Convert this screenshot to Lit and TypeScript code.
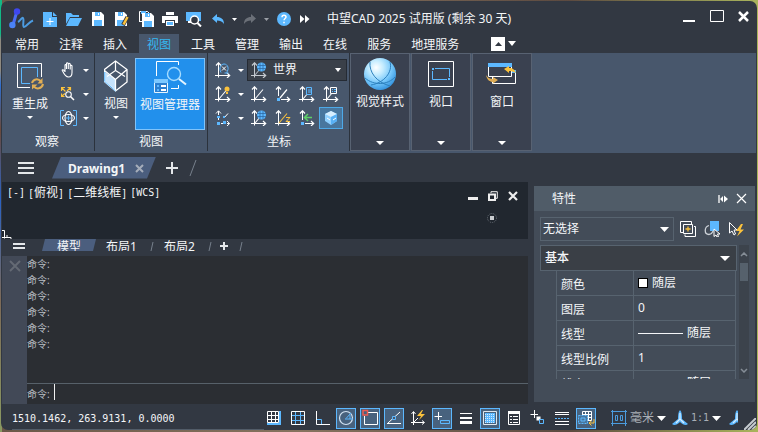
import { LitElement, html, css, svg, nothing, type TemplateResult } from "lit";
import { customElement } from "lit/decorators.js";
import { classMap } from "lit/directives/class-map.js";

const W = "#ffffff";
const B = "#5cb8ff";
const Y = "#fbc23c";

const icon = (w: number, h: number, body: unknown) =>
  html`<svg class="icon" width=${w} height=${h} viewBox="0 0 ${w} ${h}" fill="none" aria-hidden="true">${body}</svg>`;

const caret = (w = 7, h = 4) => icon(w, h, svg`<path d="M0 0H${w}L${w / 2} ${h}z" fill="#fff"/>`);

/* ---------- quick access bar ---------- */
const logo = icon(25, 22, svg`
  <path d="M4 17L8 3" stroke="#4a6cf5" stroke-width="3"/>
  <circle cx="8" cy="3.5" r="3.2" fill="#3f47ef"/><circle cx="3.4" cy="17" r="3.2" fill="#4a83f7"/>
  <path d="M9 14C11 13 13 9 14 10C15.500 11 13 18.500 15 19C17 19 20 14 24 12.500" stroke="#4c9be0" stroke-width="2"/>`);
const floppy = svg`
  <path d="M0 0H9L12 3V14H0z" fill="#fff"/><path d="M3 0H8V4H3z" fill="${B}"/><path d="M2 8H10V14H2z" fill="${B}"/><path d="M6 1h1v2H6z" fill="#fff"/><path d="M0 7h12" stroke="#fff"/>`;
const iNew = icon(14, 15, svg`<path d="M0 0H9V5H14V15H0z" fill="${B}"/><path d="M10 0L14 4H10z" fill="${B}"/><path d="M7 6V13M3.500 9.500H10.500" stroke="#fff"/>`);
const iOpen = icon(16, 14, svg`<path d="M0 1H5L7 3H13V5H4L0 12z" fill="${B}"/><path d="M4 6H16L12 14H0z" fill="${B}"/>`);
const iSave = icon(12, 14, floppy);
const iSaveAs = icon(14, 14, svg`${floppy}<path d="M12.500 5L8 13" stroke="#323842" stroke-width="4"/><path d="M12.500 5L8.500 12.500" stroke="${Y}" stroke-width="2.500"/>`);
const iSaveAll = icon(15, 16, svg`<path d="M.5 11V.5H8.500L10 2M.5 10.500H3" stroke="#fff"/><path d="M2 0h5v3H2z" fill="${B}"/><g transform="translate(3 2)">${floppy}</g>`);
const iPrint = icon(16, 14, svg`<path d="M4 0h8v3H4zM0 4h16v7h-3V8H3v3H0z" fill="#fff"/><path d="M4 9h8v5H4z" fill="#fff"/><path d="M5 10h6v3H5z" fill="${B}"/>`);
const iPreview = icon(16, 15, svg`<path d="M0 0H15V9H0z" fill="${B}"/><path d="M2 9h3v2H2z" fill="#fff"/><circle cx="8.500" cy="8" r="4" fill="#323842" stroke="#fff" stroke-width="1.500"/><path d="M11.500 11L15 14.500" stroke="#fff" stroke-width="2"/>`);
const undo = (c: string) => svg`<path d="M0 4.500L5 0V3C9 3 12 5 12 10C10 7 8 6.500 5 6.500V9z" fill="${c}"/>`;
const iUndo = icon(12, 10, undo(B));
const iRedo = icon(12, 10, svg`<g transform="matrix(-1 0 0 1 12 0)">${undo("#6b7078")}</g>`);
const iHelp = icon(14, 14, svg`<circle cx="7" cy="7" r="7" fill="${B}"/><path d="M5 5.200C5 2.500 9 2.700 9 5C9 6.500 7 6.500 7 8.300M7 9.700V11.300" stroke="#fff" stroke-width="1.500"/>`);
const iMore = icon(10, 8, svg`<path d="M0 0L4.500 4L0 8zM5 0L9.500 4L5 8z" fill="#fff"/>`);

/* ---------- ribbon ---------- */
const iRegen = icon(28, 28, svg`
  <path d="M14 25.500H1.500V1.500H25.500V15" stroke="#fff"/><path d="M14 21.500H5.500V5.500H21.500V15" stroke="${B}"/>
  <path d="M16 21C17 17 22 16 25 19.500M27 22C26 27 20 27.500 18 24.500" stroke="#e0ae55" stroke-width="2"/>
  <path d="M26.500 16V21.500H21.500zM16 27.500V22.500H21.500z" fill="#e0ae55"/>`);
const iCubeView = icon(24, 32, svg`
  <path d="M.5 11.500L11.500 19.500V31.500L.5 21.500z" fill="#c5e2fb"/>
  <path d="M11.500 1L23 9.500V22L11.500 31L.5 21.500V9.500z M.5 10.500L11.500 19.500L23 9.500M11.500 19.500V31" stroke="#fff" stroke-width="1.300"/>
  <path d="M11.500 1V10.500L3 16.500M11.500 10.500L21 16.500" stroke="#fff" stroke-width="1.200"/>
  <path d="M.7 12V21.500L11.500 31" stroke="${B}"/>`);
const iManager = icon(34, 32, svg`
  <path d="M3.500 15V.5H25.500V4M25.500 24V27.500H18" stroke="#fff"/>
  <circle cx="21" cy="13" r="6.500" stroke="#a6dcff" stroke-width="1.400"/><path d="M26 18L33 23.500" stroke="#e3f4ff" stroke-width="2"/>
  <path d="M1 18H15V32H1z" fill="#2b7fd0"/><path d="M1.500 18.500H14.500V31.500H1.500z" stroke="#e4f4ff"/><path d="M1 18H15V22H1z" fill="#7cc8ff"/>
  <path d="M4 24h2v2H4zM4 28h2v2H4z" fill="${B}"/><path d="M8 25h5M8 29h5" stroke="#fff" stroke-width="2"/>`);
const iPan = icon(14, 16, svg`<path d="M4 10V3.500C4 2.300 5.500 2.300 5.500 3.500V7V1.700C5.500.4 7.300.4 7.300 1.700V7V2.300C7.300 1 9.200 1 9.200 2.300V7.500V4C9.200 3 11 3 11 4V10.500C11 13 10 15 7.500 15C5 15 3.700 13.500 1.300 8.500C1 7.500 2.300 7 4 9.500" stroke="#fff" stroke-width="1.100"/>`);
const iZoom = icon(14, 14, svg`
  <path d="M1 1L4.500 4.500M9 1L6 4M1 9L4 6.500M.5 4V.5H4M6.500.5H9.500V3.500M.5 6.500V9.500H3.500" stroke="${Y}" stroke-width="1.200"/>
  <circle cx="7.500" cy="7.500" r="2.800" stroke="#fff" stroke-width="1.100"/><path d="M9.500 9.500L13 13" stroke="#fff" stroke-width="1.500"/>`);
const iOrbit = icon(17, 16, svg`
  <path d="M4 .5H.5V15.500H4M13 .5H16.500V15.500H13" stroke="${B}"/>
  <ellipse cx="8.500" cy="8" rx="3.500" ry="6.500" stroke="#fff" stroke-width="1.100"/><ellipse cx="8.500" cy="8" rx="6" ry="3.500" stroke="#fff" stroke-width="1.100"/>
  <path d="M8.500 5.500v5M6 8h5" stroke="${B}"/>`);

const axes = (line: string = W, c: string = W) => svg`
  <path d="M3.500 1V15.500M0 13.500H14" stroke="${c}"/><path d="M1 3.500L3.500 .8L6 3.500M12 11L14.700 13.500L12 16" stroke="${c}" stroke-width="1.200"/>
  ${line ? svg`<path d="M4 13L12 3.500" stroke="${line}" stroke-width="1.100"/>` : nothing}`;
const globe = svg`<circle cx="10.500" cy="5" r="4.500" fill="${B}"/><path d="M6 3.500h9M6 6.500h9M9 1v8M12 1v8" stroke="#2f6ba5" stroke-width=".8"/>`;
const ax = (line: string, extra: unknown, c = W) => icon(16, 16, svg`${axes(line, c)}${extra}`);
const uRot = ax("", svg`<path d="M6 10.500C3.500 6 6 2 9 2C13 2 14.500 7 11.500 10.500M9.500 11h4" stroke="${B}"/><path d="M7 4.500l4 4M11 4.500l-4 4" stroke="#fff"/>`);
const uLamp = ax(W, svg`<circle cx="12" cy="3" r="2.500" fill="${Y}"/><path d="M11 6h2v2h-2z" fill="${Y}"/>`);
const uPlain = ax(W, nothing);
const uOrigin = icon(16, 16, svg`<path d="M3.500 1V10M6 13.500H14" stroke="#fff"/><path d="M1 3.500L3.500.8L6 3.500M12 11L14.700 13.500L12 16M5 12L12 3.500" stroke="#fff" stroke-width="1.200" /><path d="M2 12h3v3H2z" fill="${B}"/>`);
const uObj = ax(W, svg`<path d="M7.500 1.500h5v7h-5z" stroke="${B}" fill="#48576c"/><path d="M9 4h3M9 6h3" stroke="${B}"/>`);
const uNamed = ax(W, svg`<path d="M7.500 1.500h6v6h-6z" stroke="#fff" fill="#48576c"/><path d="M9 3.500h1M9 5.500h1M11 3.500h2M11 5.500h2" stroke="${B}"/>`);
const uThree = icon(16, 16, svg`<path d="M3.500 1V10M6 13.500H14" stroke="#fff" stroke-dasharray="4 2"/><path d="M1 3.500L3.500.8L6 3.500M12 11L14.700 13.500L12 16M9 8L13 3.500" stroke="#fff"/><path d="M2 12h3v3H2zM8 11h3v3H8zM2 6h3v2H2zM8 6h2v2H8z" fill="${B}"/>`);
const uWorld = ax(W, globe);
const uCombo = ax("#aab0b8", globe, "#c4c9cf");
const uZ = ax(Y, svg`<path d="M11 7.500h4L11 11.500h4" stroke="${Y}"/>`);
const uPrev = icon(16, 16, svg`<path d="M3.500 1V10M6 13.500H14" stroke="#fff"/><path d="M1 3.500L3.500.8L6 3.500M12 11L14.700 13.500L12 16" stroke="#fff" stroke-width="1.200"/><path d="M2 12h3v3H2z" fill="${B}"/><path d="M13 7.500H6M9 4L5.500 7.500L9 11" stroke="#5fd068" stroke-width="1.500"/>`);
const uCube = icon(14, 14, svg`<path d="M7 0L13 3V10L7 14L1 10V3z" fill="#8fd0ff"/><path d="M7 0L13 3L7 6L1 3z" fill="#d6eeff"/><path d="M7 6L13 3V10L7 14z" fill="#58b0f5"/><path d="M3 7l3 2M9 9l3-2" stroke="#fff"/>`);

const iSphere = icon(32, 32, svg`
  <defs><radialGradient id="ball" cx=".38" cy=".3" r=".75"><stop offset="0" stop-color="#fff"/><stop offset=".3" stop-color="#c4ecff"/><stop offset=".65" stop-color="#74c6fa"/><stop offset="1" stop-color="#2e8fdc"/></radialGradient></defs>
  <circle cx="16" cy="16" r="16" fill="url(#ball)"/>
  <path d="M6 4C5 14 12 24 26 28M26 4C29 14 20 25 7 27M1 20C10 28 24 27 31 19" stroke="#2c80bd" stroke-width="1"/>`);
const iViewport = icon(26, 26, svg`<path d="M.5.5H25.500V25.500H.5z" stroke="#fff"/><path d="M7 7.500H21.500V16M19 18.500H4.500V10" stroke="${B}"/><path d="M4 7h2v2H4zM20 17h2v2h-2z" fill="${B}"/>`);
const iWindow = icon(32, 24, svg`
  <path d="M6.500 9.500H29.500V21.500H6.500z" stroke="#fff"/><path d="M26 8h4v3h-4z" fill="${B}"/><path d="M2.500 1.500H25.500V14.500H2.500z" fill="#3a4150" stroke="#fff"/><path d="M2 1H26V5H2z" fill="${B}"/>
  <path d="M18 7L23 4V6C27 6 29 8 30 11C27 9.500 25 9 23 9V11z" fill="${Y}"/><path d="M12 18L7 15V17C4 17 2 16 0 13C1 18 4 20 7 20V21.500z" fill="#e0ae55"/>`);

/* ---------- shared glyphs ---------- */
const bars = (w: number, ys: number[]) => icon(w, ys[ys.length - 1] + 2, ys.map((y) => svg`<path d="M0 ${y}H${w}V${y + 2}H0z" fill="#e4e7ea"/>`));
const cross = (s: number, c: string, sw: number) => icon(s, s, svg`<path d="M1 1L${s - 1} ${s - 1}M${s - 1} 1L1 ${s - 1}" stroke="${c}" stroke-width="${sw}"/>`);
const plus = (s: number, sw: number) => icon(s, s, svg`<path d="M${s / 2} 0V${s}M0 ${s / 2}H${s}" stroke="#e4e7ea" stroke-width="${sw}"/>`);
const slash = (w: number, h: number) => icon(w, h, svg`<path d="M${w - 1} 0L1 ${h}" stroke="#77808c"/>`);

/* ---------- properties ---------- */
const pAdd = icon(16, 16, svg`<path d="M3 11.500H.5V.5H11.500V3M5 13.500V15.500H15.500V5.500H14" stroke="#fff"/><path d="M3.500 3.500H12.500V12.500H3.500z" stroke="#fff"/><path d="M8 5.500v5M5.500 8h5" stroke="${Y}" stroke-width="1.300"/>`);
const pPick = icon(16, 16, svg`<path d="M6 0H15V10H6z" fill="${B}"/><path d="M5 4.500C0 6 0 13.500 5 13.500C8 13.500 8 12 9 10" stroke="#cdd2d8" stroke-width="1.300"/><path d="M10 8V15.500L12 14L13 16L14.500 15.500L13.500 13H16z" fill="#434c58" stroke="#fff"/>`);
const pQuick = icon(16, 16, svg`<path d="M1.500 1.500V12L4 10L6 14L7.500 13L6 9H9z" stroke="#fff"/><path d="M13 3L8 10H11.500L9 15.500L16 8.500H12.500L15 3z" fill="${Y}"/>`);
const pDock = icon(10, 10, svg`<path d="M1 1V9" stroke="#fff" stroke-width="1.300"/><path d="M2 5L5 2V8zM10 5L6 1.500V8.500z" fill="#fff"/>`);

/* ---------- status bar ---------- */
const S = (b: unknown) => icon(18, 18, b);
const sSnap = S(svg`<path d="M2.500 2.500H13.500V13.500H2.500zM6.500 2V14M10.500 2V14M2 6.500H14M2 10.500H14" stroke="#fff"/><path d="M15 2V15H2" stroke="${B}" stroke-width="2"/>`);
const sGrid = S(svg`<path d="M6.500 3V15M11.500 3V15M3 6.500H15M3 11.500H15" stroke="${B}"/><path d="M2.500 2.500H15.500V15.500H2.500z" stroke="#fff"/>`);
const sOrtho = S(svg`<path d="M3.500 2V15.500H17" stroke="#fff"/><path d="M4 10.500H8.500V15" stroke="${B}"/>`);
const sPolar = S(svg`<circle cx="9" cy="9" r="6.500" stroke="#d3e3f2" stroke-width="1.200"/><path d="M9 9.500L14 4M8 10H16M13 6v4" stroke="${B}"/>`);
const sOsnap = S(svg`<path d="M6 3.500H16.500V15.500H3.500V7" stroke="#fff"/><path d="M2 1.500H6.500V6H2z" stroke="#ec5b52" stroke-width="1.500"/>`);
const sMid = S(svg`<path d="M2 14.500H16M3 14L15 3" stroke="#fff"/><path d="M7.500 7.500H10.500V10.500H7.500z" stroke="${B}" fill="#48576c"/>`);
const sDyn = S(svg`<path d="M4.500 3V16M2 13.500H15M2.500 5L4.500 2.500L6.500 5M13 11.500L15.500 13.500L13 15.500M5 13L9 9" stroke="#fff"/><path d="M13 1L8 7H12L10 11L16 5H12L14 1z" fill="${Y}"/>`);
const sInput = S(svg`<path d="M5.500 3V11M1.500 7.500H9" stroke="#fff"/><path d="M7.500 11.500H16.500V14.500H7.500z" stroke="${B}"/>`);
const sWeight = S(svg`<path d="M3 4h12v1H3zM3 8h12v2H3zM3 12h12v3H3z" fill="#fff"/>`);
const sTrans = S(svg`<path d="M2.500 2.500H15.500V15.500H2.500z" stroke="#dfe8f0"/><path d="M4 4H14V14H4z" fill="${B}"/><path d="M4 5.500H14M4 7.500H14M4 9.500H14M4 11.500H14M4 13.500H14" stroke="#d5ecff" stroke-dasharray="1 1"/>`);
const sProps = S(svg`<path d="M3.500 2.500H14.500V15.500H3.500z" stroke="#fff"/><path d="M3 2h12v3H3z" fill="#fff"/><path d="M5 7.500h2M8 7.500h5M5 10.500h2M8 10.500h5M5 13.500h2M8 13.500h5" stroke="#fff"/>`);
const sCycle = S(svg`<path d="M5.500 1V9M1.500 5.500H9" stroke="#fff"/><path d="M7.500 7.500H11.500V11.500H7.500z" fill="#fff"/><path d="M10.500 10.500H14.500V14.500H10.500z" stroke="${B}" fill="#323842"/>`);
const sLines = S(svg`<path d="M2 3.500H16M2 5.500H16M2 12.500H16M2 15.500H16" stroke="#fff"/><path d="M2 9.500H16" stroke="${B}" stroke-dasharray="2 1"/>`);
const sAnno = S(svg`<path d="M5.500 2.500H14.500V11.500H5.500zM8.500 2V11M11.500 2V11M5 5.500H15M5 8.500H15" stroke="#fff"/><path d="M1.500 6.500H10.500V14.500H1.500z" fill="#48769e" stroke="${B}" stroke-dasharray="2 1"/><path d="M4 9h4v3H4z" stroke="${B}"/><path d="M17 10V14H12.500M14.500 12L12 14L14.500 16.500" stroke="${Y}"/>`);
const sUnit = icon(16, 16, svg`<path d="M1.500 0V16M14.500 0V16M0 1.500H16M0 13.500H16" stroke="#4b9cde"/><path d="M4.500 5.500h2v5h-2zM9.500 5.500h2v5h-2z" stroke="#4b9cde"/>`);
const blade = svg`<path d="M8 0C10 2 10 6 10 9L16 14C14 16 11 15 8 12C5 15 2 16 0 14L6 9C6 6 6 2 8 0z" fill="${B}"/><path d="M8 3V9L4 13M8 9L12 13" stroke="#d6eeff" stroke-width="1.300"/>`;
const sScale = icon(16, 16, blade);
const sScaleCut = icon(9, 16, blade);
const grip = icon(12, 12, svg`<path d="M0 12L12 0M4 12L12 4M8 12L12 8" stroke="#c6cbd0" stroke-width="2"/>`);

type Item = [string, TemplateResult];

const QUICK: Item[] = [["新建", iNew], ["打开", iOpen], ["保存", iSave], ["另存为", iSaveAs], ["全部保存", iSaveAll], ["打印", iPrint], ["打印预览", iPreview], ["撤销", iUndo]];
const MENUS = ["常用", "注释", "插入", "视图", "工具", "管理", "输出", "在线", "服务", "地理服务"];
const STATUS: [string, TemplateResult, boolean][] = [
  ["捕捉", sSnap, false], ["栅格", sGrid, false], ["正交", sOrtho, false], ["极轴", sPolar, true], ["对象捕捉", sOsnap, true],
  ["对象追踪", sMid, true], ["动态UCS", sDyn, false], ["动态输入", sInput, true], ["线宽", sWeight, false], ["透明度", sTrans, true],
  ["快捷特性", sProps, false], ["选择循环", sCycle, false], ["线型显示", sLines, false], ["注释监视", sAnno, true],
];

@customElement("app-root")
export class AppRoot extends LitElement {
  static styles = css`
    :host {
      display: flex; box-sizing: border-box; min-height: 100vh; padding: 1px 1px 2px;
      background:
        linear-gradient(#12b886 0 34px, #8f8a80 40px 70px, #2f6fd0 85px, #6b4a3c 130px, #2a62c4 200px, #7d6a58 300px, #8a9a62 100%) 0 0 / 2px 100% no-repeat,
        linear-gradient(90deg, #6b5848, #86735f 40%, #5c4a40 75%, #a9b45c);
      font: 12px/16px "Noto Sans", "Noto Sans CJK SC", sans-serif; color: #f4f6f8;
    }
    * { box-sizing: border-box; }
    button, select, input { font: inherit; color: inherit; background: none; border: 0; margin: 0; padding: 0; border-radius: 0; }
    button { display: flex; align-items: center; justify-content: center; white-space: nowrap; }
    select { appearance: none; }
    input { outline: none; }
    .icon { display: block; flex: none; }
    .window { flex: 1; min-width: 0; display: flex; flex-direction: column; padding: 0 1px; background: #323842; border-radius: 7px; overflow: hidden; }

    .title { display: flex; align-items: center; height: 33px; padding: 3px 3px 0 7px; }
    .logo { width: 29px; }
    .tool { width: 24px; height: 24px; }
    .drop { width: 8px; height: 24px; }
    .help { margin-left: 2px; }
    .more { width: 18px; height: 24px; }
    .caption { margin: 0 0 0 13px; font: inherit; flex: 1; white-space: nowrap; }
    .controls { display: flex; gap: 4px; padding-bottom: 6px; }
    .controls .tool:last-child { width: 20px; }

    .menus { display: flex; align-items: stretch; height: 19px; padding-left: 5px; gap: 4px; }
    .menu { padding: 3px 8px 0; }
    .menu.on { background: #48576c; color: #35b8f2; }
    .fold { align-self: center; width: 14px; height: 14px; margin-left: 20px; background: #fff; }
    .menus .drop { height: 19px; margin-left: -1px; }

    .ribbon { display: flex; height: 100px; background: #48576c; }
    .group { display: flex; flex-direction: column; gap: 4px; padding: 5px 2px 0; height: 98px; border-right: 1px solid #2b323c; }
    .body { display: flex; height: 72px; }
    .name { text-align: center; line-height: 16px; }
    .observe { padding-left: 0; }
    .observe .body { gap: 5px; padding-left: 7px; }
    .big { flex-direction: column; justify-content: flex-start; gap: 4px; padding-top: 2px; width: 38px; height: 72px; }
    .big.wide { width: 42px; }
    .big.on { width: 70px; background: #2290ec; border: 1px solid #7fc4fb; }
    .art { display: flex; align-items: center; justify-content: center; height: 32px; }
    .row { display: flex; height: 24px; align-items: center; }
    .cell { width: 24px; height: 22px; }
    .cell.on { background: #48769e; border: 1px solid #4ea9e8; }
    .side { width: 12px; height: 22px; }
    .ucs { padding-left: 3px; }
    .combo { display: flex; align-items: center; position: relative; border: 1px solid #252b34; background: #3a4049; width: 100px; height: 22px; padding: 0 5px 0 3px; gap: 6px; }
    .combo select { flex: 1; min-width: 0; height: 20px; }
    .combo .icon:last-child { pointer-events: none; }
    .panel { flex-direction: column; justify-content: flex-start; gap: 4px; width: 60px; height: 98px; margin-right: 1px; padding: 4px 0 5px; background: #3a4150; border: 1px solid #586272; }
    .panel > .icon { margin-top: auto; }

    .docs { display: flex; align-items: center; height: 29px; padding-left: 16px; }
    .doc { display: flex; align-items: center; gap: 8px; width: 104px; height: 22px; margin: 0 10px 0 18px; padding: 2px 12px 0 16px; background: #4b5e7e; clip-path: polygon(9px 0, 100% 0, calc(100% - 9px) 100%, 0 100%); font-weight: 700; justify-content: space-between; white-space: nowrap; }
    .docs .slash { margin-left: 11px; }

    .work { flex: 1; display: flex; gap: 6px; min-height: 0; }
    .left { flex: 1; min-width: 0; display: flex; flex-direction: column; }
    .canvas { flex: 1; position: relative; display: flex; justify-content: space-between; background: #21272f; padding: 3px 5px 0 5px; min-height: 57px; }
    .mono { font-family: "DejaVu Sans Mono", "Noto Sans CJK SC", monospace; font-size: 10px; white-space: nowrap; }
    .cjk { font-size: 12px; }
    .view { display: flex; gap: 3px; }
    .view-tools { display: flex; }
    .view-tools button { width: 20px; height: 22px; }
    .origin { position: absolute; left: 0; bottom: 0; }
    .orb { position: absolute; right: 31px; top: 31px; }
    .layouts { display: flex; height: 17px; padding: 0 0 5px 11px; }
    .layouts > * { height: 12px; overflow: hidden; }
    .layouts button { align-items: flex-start; }
    .layouts .bar { width: 12px; padding-top: 4px; margin-right: 17px; }
    .layouts .tab { width: 54px; background: #4b5e7e; clip-path: polygon(3px 0, 100% 0, calc(100% - 3px) 100%, 0 100%); }
    .layouts .sheet { width: 51px; }
    .layouts .sep { width: 7px; display: flex; align-items: center; justify-content: flex-end; padding-top: 2px; }
    .layouts .add { width: 24px; padding-top: 3px; }

    .command { display: flex; background: #2b2e33; }
    .strip { width: 25px; background: #424957; align-items: flex-start; padding-top: 4px; }
    .console { flex: 1; min-width: 0; color: #b9bec4; font-size: 10px; }
    .log { min-height: 127px; }
    .line { height: 16px; }
    .prompt { display: flex; height: 21px; border-top: 1px solid #57616a; gap: 4px; }
    .prompt label { padding-top: 2px; width: 23px; }
    .cursor { width: 1px; height: 16px; background: #f0f0f0; }
    .prompt input { flex: 1; min-width: 0; caret-color: transparent; }

    .props { width: 221px; margin: 4px 1px 2px 0; background: #434c58; display: flex; flex-direction: column; min-height: 0; }
    .head { display: flex; align-items: center; height: 25px; padding: 0 5px 0 18px; background: #505c68; }
    .head h2 { flex: 1; margin: 0; font: inherit; }
    .head button { width: 18px; height: 20px; }
    .pick { display: flex; align-items: center; gap: 4px; padding: 6px 5px 3px 6px; }
    .choose { display: flex; align-items: center; width: 134px; height: 24px; border: 1px solid #57636f; padding: 0 4px 0 2px; }
    .choose select { flex: 1; height: 22px; }
    .pick button { width: 20px; height: 24px; }
    .scroll { flex: 1; min-height: 0; display: flex; gap: 2px; margin: 1px 6px 23px; overflow: hidden; height: 134px; }
    .list { flex: 1; height: 134px; overflow: hidden; }
    .section { width: 100%; height: 26px; justify-content: space-between; padding: 0 6px 0 4px; background: #3a3f46; border: 1px solid #57636f; font-weight: 500; }
    table { width: 180px; margin-left: 16px; border-collapse: collapse; table-layout: fixed; margin-top: -1px; }
    th, td { height: 25px; padding: 0 3px 0 4px; border: 1px solid #57636f; font-weight: 400; text-align: left; line-height: 16px; }
    th { width: 77px; padding-top: 3px; }
    .val { display: flex; align-items: center; gap: 4px; }
    .swatch { width: 10px; height: 10px; background: #fff; border: 1px solid #000; }
    .stroke { width: 45px; height: 1px; background: #f4f6f8; }
    .track { width: 10px; height: 134px; display: flex; flex-direction: column; align-items: center; background: #3c434c; }
    .track .up { height: 18px; width: 10px; }
    .thumb { width: 8px; height: 18px; background: #56616c; }
    .track .down { height: 18px; width: 10px; margin-top: auto; }

    .status { display: flex; align-items: center; height: 26px; padding-top: 2px; }
    .coords { flex: 0 0 262px; height: 23px; padding: 4px 0 0 10px; }
    .rule { display: block; height: 1px; background: #525c68; margin-top: 2px; }
    .toggles { display: flex; gap: 4px; }
    .toggle { width: 20px; height: 21px; }
    .toggle.on { background: #48627e; border: 1px solid #5cb8ff; }
    .unit { gap: 3px; margin-left: 15px; color: #a9afb6; }
    .scale { gap: 3px; margin-left: 6px; color: #a9afb6; }
    .cut { margin-left: 8px; }
    .grip { margin: 3px 0 0 auto; align-self: flex-end; }
  `;

  private tool([label, art]: Item, cls = "tool") {
    return html`<button class=${cls} aria-label=${label}>${art}</button>`;
  }

  private drop(label: string, cls = "drop", dim = false) {
    return html`<button class=${cls} aria-label=${label}>${dim ? icon(5, 3, svg`<path d="M0 0H5L2.500 3z" fill="#9a9fa6"/>`) : cls === "drop" ? caret(5, 3) : caret(6, 3)}</button>`;
  }

  private renderTitle() {
    return html`<header class="title">
      <span class="logo">${logo}</span>
      ${QUICK.map((q) => this.tool(q))}
      ${this.drop("撤销列表")}${this.tool(["重做", iRedo])}${this.drop("重做列表", "drop", true)}
      <button class="tool help" aria-label="帮助">${iHelp}</button>
      <button class="more" aria-label="更多">${iMore}</button>
      <h1 class="caption">中望CAD 2025 试用版 (剩余 30 天)</h1>
      <div class="controls">
        ${this.tool(["最小化", icon(12, 12, svg`<path d="M0 10h12v2H0z" fill="#fff"/>`)])}
        ${this.tool(["最大化", icon(14, 12, svg`<path d="M.5.5H13.500V11.500H.5z" stroke="#fff"/>`)])}
        ${this.tool(["关闭", cross(11, "#fff", 2.5)])}
      </div>
    </header>
    <nav class="menus">
      ${MENUS.map((m) => html`<button class=${classMap({ menu: true, on: m === "视图" })}>${m}</button>`)}
      <button class="fold" aria-label="折叠功能区">${icon(7, 4, svg`<path d="M0 4H7L3.500 0z" fill="#323842"/>`)}</button>
      <button class="drop" aria-label="功能区选项">${caret(8, 5)}</button>
    </nav>`;
  }

  private big(label: string, art: TemplateResult, cls: string, arrow: boolean) {
    return html`<button class="big ${cls}"><span class="art">${art}</span><span>${label}</span>${arrow ? caret(6, 3) : nothing}</button>`;
  }

  private split(label: string, art: TemplateResult) {
    return html`${this.tool([label, art], "cell")}${this.drop(label + "选项", "side")}`;
  }

  private renderRibbon() {
    return html`<section class="ribbon">
      <div class="group observe">
        <div class="body">
          ${this.big("重生成", iRegen, "wide", true)}
          <div>
            <div class="row">${this.split("平移", iPan)}</div>
            <div class="row">${this.split("缩放", iZoom)}</div>
            <div class="row">${this.split("动态观察", iOrbit)}</div>
          </div>
        </div>
        <div class="name">观察</div>
      </div>
      <div class="group">
        <div class="body">${this.big("视图", iCubeView, "", true)}${this.big("视图管理器", iManager, "on", false)}</div>
        <div class="name">视图</div>
      </div>
      <div class="group ucs">
        <div class="body">
          <div>
            <div class="row">${this.split("旋转坐标系", uRot)}
              <div class="combo">${uCombo}<select aria-label="坐标系"><option>世界</option></select>${caret(6, 4)}</div>
            </div>
            <div class="row">${this.split("坐标系图标", uLamp)}
              ${([["坐标系", uPlain], ["原点", uOrigin], ["对象", uObj], ["命名", uNamed]] as Item[]).map((i) => this.tool(i, "cell"))}
            </div>
            <div class="row">${this.split("三点", uThree)}
              ${([["世界坐标", uWorld], ["Z轴", uZ], ["上一个", uPrev]] as Item[]).map((i) => this.tool(i, "cell"))}
              ${this.tool(["视图立方", uCube], "cell on")}
            </div>
          </div>
        </div>
        <div class="name">坐标</div>
      </div>
      ${([["视觉样式", iSphere], ["视口", iViewport], ["窗口", iWindow]] as Item[]).map(
        ([n, a]) => html`<button class="panel"><span class="art">${a}</span><span>${n}</span>${caret(8, 4)}</button>`)}
    </section>`;
  }

  private renderDocs() {
    return html`<nav class="docs">
      <button aria-label="文档菜单">${bars(16, [0, 5, 10])}</button>
      <div class="doc"><span>Drawing1</span><button aria-label="关闭文档">${cross(9, "#a5adba", 2)}</button></div>
      <button aria-label="新建文档">${plus(12, 2)}</button>
      <span class="slash">${slash(8, 16)}</span>
    </nav>`;
  }

  private renderLeft() {
    return html`<main class="left">
      <section class="canvas">
        <div class="mono view">
          <span>[-]</span><span>[<span class="cjk">俯视</span>]</span><span>[<span class="cjk">二维线框</span>]</span><span>[WCS]</span>
        </div>
        <div class="view-tools">
          <button aria-label="最小化视图">${icon(10, 8, svg`<path d="M0 5h10v3H0z" fill="#eee"/>`)}</button>
          <button aria-label="还原视图">${icon(10, 10, svg`<path d="M3 2V.7H9.300V7.300H8" stroke="#eee"/><path d="M1 3.500H7V9H1z" stroke="#eee" stroke-width="2"/>`)}</button>
          <button aria-label="关闭视图">${cross(10, "#eee", 2.2)}</button>
        </div>
        <span class="orb">${icon(10, 10, svg`<circle cx="5" cy="5" r="4.500" stroke="#666c74" stroke-dasharray="1 1"/><path d="M3 3h4v4H3z" fill="#c9ccd0"/>`)}</span>
        <span class="origin">${icon(10, 9, svg`<path d="M0 .5H2.500V8.500M0 7.500H9V9M5 5v3" stroke="#fff"/>`)}</span>
      </section>
      <nav class="layouts">
        <button class="bar" aria-label="布局菜单">${bars(12, [0, 4])}</button>
        <button class="tab">模型</button>
        <button class="sheet">布局1</button><span class="sep">${slash(4, 9)}</span>
        <button class="sheet">布局2</button><span class="sep">${slash(4, 9)}</span>
        <button class="add" aria-label="新建布局">${plus(8, 2)}</button><span class="sep">${slash(4, 9)}</span>
      </nav>
      <section class="command">
        <button class="strip" aria-label="关闭命令行">${cross(12, "#646a74", 2)}</button>
        <div class="console">
          <div class="log">${Array.from({ length: 6 }, () => html`<div class="line">命令:</div>`)}</div>
          <div class="prompt"><label for="cmd">命令:</label><span class="cursor"></span><input id="cmd" autocomplete="off" /></div>
        </div>
      </section>
    </main>`;
  }

  private renderProps() {
    const line = html`<span class="val"><span class="stroke"></span>随层</span>`;
    const rows: [string, unknown][] = [
      ["颜色", html`<span class="val"><span class="swatch"></span>随层</span>`],
      ["图层", "0"], ["线型", line], ["线型比例", "1"], ["线宽", line],
    ];
    const chevron = (d: string) => icon(8, 5, svg`<path d="${d}" stroke="#858d96" stroke-width="1.500"/>`);
    return html`<aside class="props">
      <div class="head"><h2>特性</h2><button aria-label="停靠">${pDock}</button><button aria-label="关闭特性">${cross(11, "#fff", 1.2)}</button></div>
      <div class="pick">
        <div class="choose"><select aria-label="选择集"><option>无选择</option></select>${caret(9, 5)}</div>
        <button aria-label="添加选择">${pAdd}</button><button aria-label="选择对象">${pPick}</button><button aria-label="快速选择">${pQuick}</button>
      </div>
      <div class="scroll">
        <div class="list">
          <button class="section"><span>基本</span>${caret(10, 5)}</button>
          <table><tbody>${rows.map(([k, v]) => html`<tr><th scope="row">${k}</th><td>${v}</td></tr>`)}</tbody></table>
        </div>
        <div class="track">
          <button class="up" aria-label="向上滚动">${chevron("M1 4L4 1L7 4")}</button><div class="thumb"></div>
          <button class="down" aria-label="向下滚动">${chevron("M1 1L4 4L7 1")}</button>
        </div>
      </div>
    </aside>`;
  }

  private renderStatus() {
    return html`<footer class="status">
      <div class="coords mono">1510.1462, 263.9131, 0.0000<span class="rule"></span></div>
      <div class="toggles">${STATUS.map(([n, a, on]) => html`<button class=${classMap({ toggle: true, on })} aria-label=${n} aria-pressed=${on}>${a}</button>`)}</div>
      <button class="unit">${sUnit}<span>毫米</span>${caret(9, 5)}</button>
      <button class="scale">${sScale}<span class="mono">1:1</span>${caret(9, 5)}</button>
      <button class="cut" aria-label="注释比例">${sScaleCut}</button>
      <span class="grip">${grip}</span>
    </footer>`;
  }

  render() {
    return html`<div class="window">
      ${this.renderTitle()}${this.renderRibbon()}${this.renderDocs()}
      <div class="work">${this.renderLeft()}${this.renderProps()}</div>
      ${this.renderStatus()}
    </div>`;
  }
}
